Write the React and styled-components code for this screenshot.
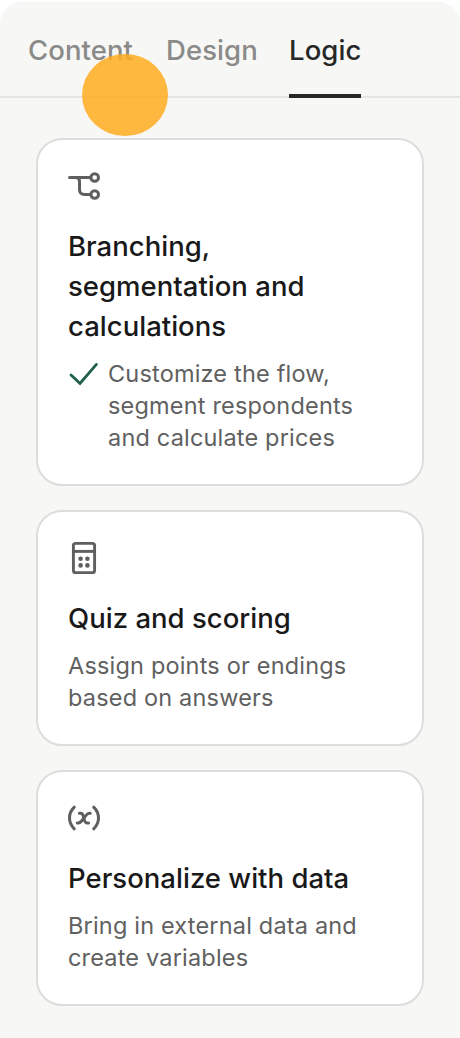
import React, { useState } from 'react';
import styled, { createGlobalStyle } from 'styled-components';

const GlobalStyle = createGlobalStyle`
  * {
    box-sizing: border-box;
  }

  body {
    margin: 0;
    background: #ffffff;
    font-family: Inter, "Liberation Sans", sans-serif;
    -webkit-font-smoothing: antialiased;
  }
`;

const Panel = styled.div`
  position: relative;
  width: 460px;
  height: 1036px;
  margin-top: 2px;
  background: #f7f7f5;
  border-top: 1px solid #f3f3f2;
  border-radius: 22px 22px 0 0;
`;

const TabBar = styled.div`
  display: flex;
  gap: 32px;
  height: 95px;
  padding-left: 28px;
  border-bottom: 2px solid #e5e5e4;
`;

const Tab = styled.button`
  flex: none;
  width: ${(props) => props.$width}px;
  height: 95px;
  padding: 3px 0 0;
  border: none;
  border-bottom: 4px solid ${(props) => (props.$active ? '#262727' : 'transparent')};
  background: none;
  color: ${(props) => (props.$active ? '#262727' : '#8a8a89')};
  font-family: inherit;
  font-size: 27.5px;
  font-weight: 500;
  letter-spacing: 0.08px;
  line-height: 88px;
  text-align: left;
  white-space: nowrap;
  cursor: pointer;
`;

const CardList = styled.div`
  display: flex;
  flex-direction: column;
  gap: 24px;
  padding: 40px 36px 0;
`;

const Card = styled.div`
  padding: 30px;
  background: #ffffff;
  border: 2px solid #dddddc;
  border-radius: 26px;
`;

const CardIcon = styled.svg`
  display: block;
  width: 32px;
  height: 32px;
  margin-bottom: 24px;
  overflow: visible;
`;

const CardTitle = styled.h2`
  margin: 0 0 12px;
  color: #191919;
  font-size: 27.5px;
  font-weight: 500;
  letter-spacing: 0.02px;
  line-height: 40px;
  white-space: pre-line;
`;

const CardBody = styled.div`
  display: flex;
  gap: 8px;
`;

const CheckIcon = styled.svg`
  flex: none;
  width: 32px;
  height: 32px;
`;

const CardText = styled.p`
  margin: 0;
  color: #606060;
  font-size: 23.5px;
  letter-spacing: 0.18px;
  line-height: 32px;
  white-space: pre-line;
`;

const TapMarker = styled.div`
  position: absolute;
  top: 51px;
  left: 82px;
  width: 86px;
  height: 82px;
  border-radius: 50%;
  background: rgba(255, 172, 33, 0.86);
  pointer-events: none;
`;

const BranchIcon = () => (
  <CardIcon viewBox="0 0 32 32" fill="none" stroke="#5f5f5f" strokeWidth="3" strokeLinecap="round">
    <path d="M1.5 7.5H22.5" />
    <path d="M8 7.5C10.2 7.5 11.5 9 11.5 11.5V19.5C11.5 23 13 24.5 16.5 24.5H22.5" />
    <circle cx="26.7" cy="7.5" r="3.8" />
    <circle cx="26.7" cy="24.5" r="3.8" />
  </CardIcon>
);

const CalculatorIcon = () => (
  <CardIcon viewBox="0 0 32 32" fill="none" stroke="#5f5f5f" strokeWidth="2.9">
    <rect x="5.4" y="1.4" width="21.2" height="29.2" rx="2.2" />
    <path d="M5.4 9.4H26.6" />
    <g fill="#5f5f5f" stroke="none">
      <circle cx="12.6" cy="16.7" r="2.3" />
      <circle cx="19.4" cy="16.7" r="2.3" />
      <circle cx="12.6" cy="23.4" r="2.3" />
      <circle cx="19.4" cy="23.4" r="2.3" />
    </g>
  </CardIcon>
);

const VariableIcon = () => (
  <CardIcon viewBox="0 0 32 32" fill="none" stroke="#5f5f5f" strokeWidth="3" strokeLinecap="round">
    <path d="M6.3 5.2C-0.1 11.4 -0.1 20.6 6.3 26.8" />
    <path d="M25.7 5.2C32.1 11.4 32.1 20.6 25.7 26.8" />
    <path d="M11.4 11.3H12.6C14.5 11.3 14.9 12.4 15.3 14L16.3 18C16.8 19.9 17.4 21 19.2 21H20.6" />
    <path d="M22.3 11.3H21.3C19.6 11.3 18.4 12.7 17.2 14.3L14.4 18C13 19.8 12 21 10.4 21H9.3" />
  </CardIcon>
);

const tabs = [
  { name: 'Content', width: 106 },
  { name: 'Design', width: 91 },
  { name: 'Logic', width: 72 },
];

const cards = [
  {
    icon: BranchIcon,
    title: 'Branching,\nsegmentation and\ncalculations',
    text: 'Customize the flow,\nsegment respondents\nand calculate prices',
    done: true,
  },
  {
    icon: CalculatorIcon,
    title: 'Quiz and scoring',
    text: 'Assign points or endings\nbased on answers',
  },
  {
    icon: VariableIcon,
    title: 'Personalize with data',
    text: 'Bring in external data and\ncreate variables',
  },
];

const App = () => {
  const [activeTab, setActiveTab] = useState('Logic');

  return (
    <>
      <GlobalStyle />
      <Panel>
        <TabBar>
          {tabs.map((tab) => (
            <Tab
              key={tab.name}
              $width={tab.width}
              $active={activeTab === tab.name}
              onClick={() => setActiveTab(tab.name)}
            >
              {tab.name}
            </Tab>
          ))}
        </TabBar>
        <CardList>
          {cards.map((card) => (
            <Card key={card.title}>
              <card.icon />
              <CardTitle>{card.title}</CardTitle>
              <CardBody>
                {card.done && (
                  <CheckIcon viewBox="0 0 32 32" fill="none" stroke="#1f6048" strokeWidth="2.8">
                    <path d="M3 17L12 25.4L28.4 6.4" strokeLinecap="round" />
                  </CheckIcon>
                )}
                <CardText>{card.text}</CardText>
              </CardBody>
            </Card>
          ))}
        </CardList>
        <TapMarker />
      </Panel>
    </>
  );
};

export default App;
